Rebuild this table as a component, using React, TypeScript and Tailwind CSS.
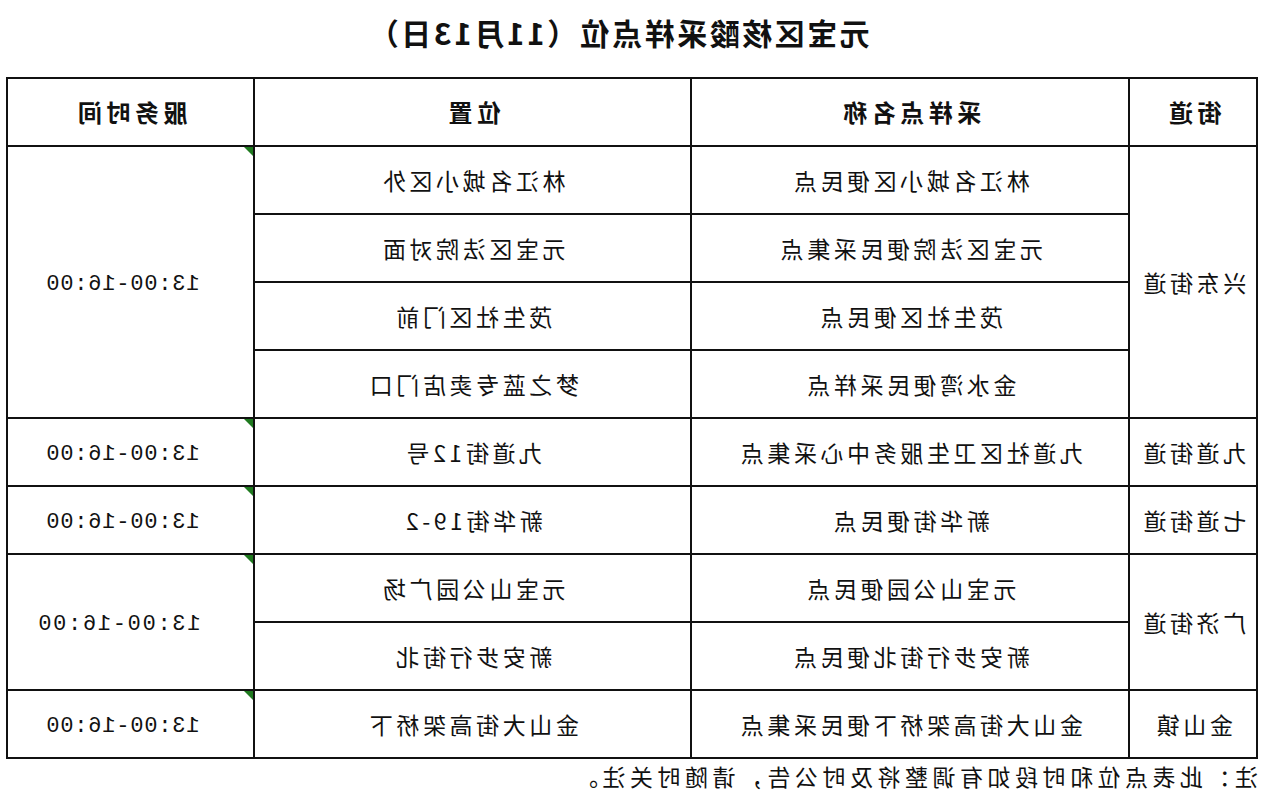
const rows = [
  { street: "兴东街道", span: 4, name: "林江名城小区便民点", place: "林江名城小区外", time: "13:00-16:00" },
  { name: "元宝区法院便民采集点", place: "元宝区法院对面" },
  { name: "茂生社区便民点", place: "茂生社区门前" },
  { name: "金水湾便民采样点", place: "梦之蓝专卖店门口" },
  { street: "九道街道", span: 1, name: "九道社区卫生服务中心采集点", place: "九道街12号", time: "13:00-16:00", timeSpan: 1 },
  { street: "七道街道", span: 1, name: "新华街便民点", place: "新华街19-2", time: "13:00-16:00", timeSpan: 1 },
  { street: "广济街道", span: 2, name: "元宝山公园便民点", place: "元宝山公园广场", time: "13:00-16:00", timeSpan: 2, wide: true },
  { name: "新安步行街北便民点", place: "新安步行街北" },
  { street: "金山镇", span: 1, name: "金山大街高架桥下便民采集点", place: "金山大街高架桥下", time: "13:00-16:00", timeSpan: 1 },
]

const cell = "border-2 border-[#111] text-center align-middle p-0"

function TimeCell({ time, span, wide }: { time: string; span: number; wide?: boolean }) {
  return (
    <td rowSpan={span} className={`${cell} relative`}>
      <span className="absolute left-0 top-0 h-0 w-0 border-t-[9px] border-r-[9px] border-t-[#1f7a1f] border-r-transparent" />
      <span
        className={
          wide
            ? "font-['Liberation_Mono','Noto_Sans_CJK_SC',monospace] text-[22px] tracking-[1.7px] pl-[24px]"
            : "font-['Liberation_Mono','Noto_Sans_CJK_SC',monospace] text-[22px] tracking-[0.8px] pl-[16px]"
        }
      >
        {time}
      </span>
    </td>
  )
}

export default function App() {
  return (
    <div className="w-[1266px] h-[800px] bg-white text-[#111] overflow-hidden -scale-x-100 font-['Noto_Sans_CJK_SC','Noto_Sans',sans-serif]">
      <div className="h-[77px] flex items-center justify-center pb-[12px] pl-[30px]">
        <h1 className="text-[30px] font-bold tracking-[2.5px]">元宝区核酸采样点位（11月13日）</h1>
      </div>
      <table className="ml-[8px] w-[1250px] border-collapse table-fixed">
        <colgroup>
          <col className="w-[128px]" />
          <col className="w-[438px]" />
          <col className="w-[437px]" />
          <col className="w-[247px]" />
        </colgroup>
        <thead>
          <tr className="h-[68px] text-[24px] font-bold tracking-[4.5px]">
            <th className={cell}>街道</th>
            <th className={cell}>采样点名称</th>
            <th className={cell}>位置</th>
            <th className={cell}>服务时间</th>
          </tr>
        </thead>
        <tbody className="text-[23px] tracking-[3.6px]">
          {rows.map((r, i) => (
            <tr key={i} className="h-[68px]">
              {r.street && (
                <td rowSpan={r.span} className={cell}>{r.street}</td>
              )}
              <td className={cell}>{r.name}</td>
              <td className={cell}>{r.place}</td>
              {r.time && <TimeCell time={r.time} span={r.timeSpan ?? r.span ?? 1} wide={r.wide} />}
            </tr>
          ))}
        </tbody>
      </table>
      <p className="ml-[8px] mt-[2px] text-[23px] tracking-[4.5px] leading-[30px]">
        注：此表点位和时段如有调整将及时公告，请随时关注。
      </p>
    </div>
  )
}
